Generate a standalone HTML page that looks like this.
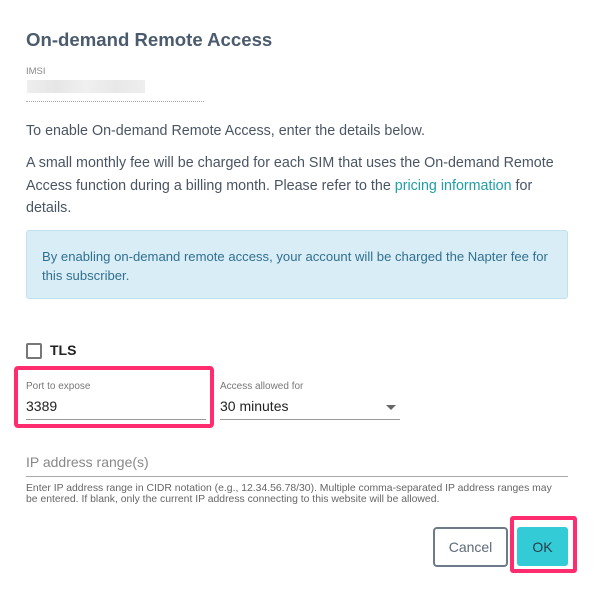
<!DOCTYPE html>
<html><head><style>
body{margin:0;width:595px;height:593px;background:#fff;font-family:"Liberation Sans",sans-serif;position:relative;overflow:hidden}
.a{position:absolute;white-space:nowrap}
.p{color:#4a5563;font-size:14.3px}
</style></head><body>
<div class="a" style="left:26px;top:29px;font-size:18.6px;font-weight:bold;color:#4b5b6e">On-demand Remote Access</div>
<div class="a" style="left:26px;top:66px;font-size:9.5px;color:#888">IMSI</div>
<div class="a" style="left:27px;top:80px;width:118px;height:13px;background:linear-gradient(90deg,#eee,#e6e6e6,#f0f0f0,#e8e8e8,#eee)"></div>
<div class="a" style="left:26px;top:101px;width:178px;border-top:1px dotted #aaa"></div>
<div class="a p" style="left:26px;top:123px">To enable On-demand Remote Access, enter the details below.</div>
<div class="a p" style="left:26px;top:155px">A small monthly fee will be charged for each SIM that uses the On-demand Remote</div>
<div class="a p" style="left:26px;top:178px">Access function during a billing month. Please refer to the <span style="color:#1f9ea6">pricing information</span> for</div>
<div class="a p" style="left:26px;top:200px">details.</div>
<div class="a" style="left:26px;top:230px;width:540px;height:67px;background:#d9edf7;border:1px solid #bfe3ee;border-radius:3px"></div>
<div class="a" style="left:42px;top:247px;font-size:13.1px;color:#31708f;line-height:19px">By enabling on-demand remote access, your account will be charged the Napter fee for<br>this subscriber.</div>
<div class="a" style="left:26px;top:343px;width:12px;height:12px;border:2px solid #777;border-radius:2px"></div>
<div class="a" style="left:50px;top:342px;font-size:14px;font-weight:bold;color:#222">TLS</div>
<div class="a" style="left:14px;top:366px;width:192px;height:54px;border:4px solid #ff2d6f;border-radius:4px"></div>
<div class="a" style="left:26px;top:381px;font-size:10px;color:#777">Port to expose</div>
<div class="a" style="left:26px;top:398px;font-size:14px;color:#222">3389</div>
<div class="a" style="left:26px;top:419px;width:180px;border-top:1px solid #999"></div>
<div class="a" style="left:220px;top:381px;font-size:10px;color:#777">Access allowed for</div>
<div class="a" style="left:220px;top:398px;font-size:14px;color:#222">30 minutes</div>
<div class="a" style="left:386px;top:405px;width:0;height:0;border-left:5px solid transparent;border-right:5px solid transparent;border-top:5px solid #666"></div>
<div class="a" style="left:220px;top:419px;width:180px;border-top:1px solid #999"></div>
<div class="a" style="left:26px;top:454px;font-size:14px;color:#888">IP address range(s)</div>
<div class="a" style="left:26px;top:476px;width:542px;border-top:1px solid #aaa"></div>
<div class="a" style="left:26px;top:483px;font-size:10.4px;color:#666;line-height:11px">Enter IP address range in CIDR notation (e.g., 12.34.56.78/30). Multiple comma-separated IP address ranges may<br>be entered. If blank, only the current IP address connecting to this website will be allowed.</div>
<div class="a" style="left:433px;top:527px;width:71px;height:36px;border:2px solid #6c7a89;border-radius:4px;color:#5d6b7a;font-size:14px;text-align:center;line-height:36px">Cancel</div>
<div class="a" style="left:510px;top:516px;width:59px;height:49px;border:4px solid #ff2d6f;border-radius:3px"></div>
<div class="a" style="left:517px;top:527px;width:51px;height:39px;background:#33ccd6;border-radius:3px;color:#2d3b4a;font-size:14px;text-align:center;line-height:40px">OK</div>
</body></html>
